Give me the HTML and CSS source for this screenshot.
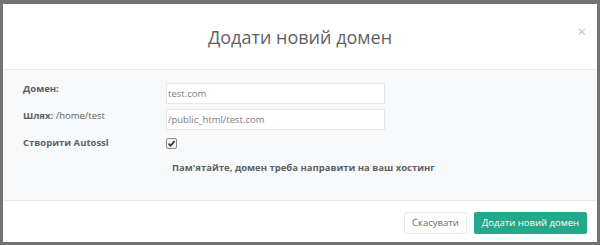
FILE: index.html
```html
<!DOCTYPE html>
<html lang="uk">
<head>
    <meta charset="UTF-8">
    <title>Додати новий домен</title>
    <link rel="stylesheet" href="styles.css">
</head>
<body>
    <div class="modal">
        <div class="modal-header">
            <div class="modal-title">Додати новий домен</div>
            <span class="close">&times;</span>
        </div>
        <div class="modal-body">
            <div class="form-row">
                <label class="form-label">Домен:</label>
                <input class="form-input" type="text" value="test.com">
            </div>
            <div class="form-row">
                <label class="form-label">Шлях: <span class="plain">/home/test</span></label>
                <input class="form-input" type="text" value="/public_html/test.com">
            </div>
            <div class="form-row check-row">
                <label class="form-label">Створити Autossl</label>
                <span class="checkbox">
                    <svg viewBox="0 0 12 12" width="9" height="9">
                        <path d="M2 6.2 L4.8 9 L10 2.8" fill="none" stroke="#333" stroke-width="2.2"/>
                    </svg>
                </span>
            </div>
            <div class="note">Пам'ятайте, домен треба направити на ваш хостинг</div>
        </div>
        <div class="modal-footer">
            <button class="btn btn-default">Скасувати</button>
            <button class="btn btn-primary">Додати новий домен</button>
        </div>
    </div>
</body>
</html>
```

FILE: styles.css
```css
body {
    margin: 0;
    width: 600px;
    height: 245px;
    background: #737373;
    font-family: "Open Sans", "Noto Sans", sans-serif;
    overflow: hidden;
}

.modal {
    margin: 4px 3px 0 3px;
    height: 238px;
    background: #fff;
    display: flex;
    flex-direction: column;
}

.modal-header {
    position: relative;
    height: 65px;
    display: flex;
    align-items: center;
    justify-content: center;
    border-bottom: 1px solid #e6eaef;
}

.modal-title {
    font-size: 18px;
    color: #5f6264;
    margin-top: 0;
}

.close {
    position: absolute;
    right: 11px;
    top: 17px;
    font-size: 15px;
    color: #c2c2c2;
}

.modal-body {
    height: 131px;
    background: #f7f9fb;
    border-bottom: 1px solid #e6eaef;
    padding: 13px 0 0 20px;
    box-sizing: border-box;
}

.form-row {
    display: flex;
    align-items: flex-start;
    margin-bottom: 5px;
}

.form-label {
    width: 143px;
    font-size: 9.5px;
    line-height: 12px;
    font-weight: 700;
    color: #5e6163;
}

.form-row:nth-child(2) .form-label {
    padding-top: 1px;
}

.plain {
    font-weight: 400;
}

.form-input {
    width: 219px;
    height: 21px;
    box-sizing: border-box;
    border: 1px solid #e5e6e7;
    background: #fff;
    padding: 0 0 0 1px;
    margin: 0;
    font-family: inherit;
    font-size: 9.5px;
    color: #7b7e80;
    outline: none;
}

.check-row {
    margin-top: 8px;
    margin-bottom: 0;
}

.check-row .form-label {
    margin-top: -1px;
}

.checkbox {
    width: 11px;
    height: 11px;
    box-sizing: border-box;
    border: 1px solid #8a8a8a;
    border-radius: 2px;
    background: #f1f1f1;
    display: flex;
    align-items: center;
    justify-content: center;
}

.note {
    margin: 13px 0 0 149px;
    font-size: 9.5px;
    line-height: 12px;
    font-weight: 700;
    color: #5e6163;
}

.modal-footer {
    flex: 1;
    display: flex;
    justify-content: flex-end;
    align-items: center;
    gap: 7px;
    padding-right: 10px;
}

.btn {
    height: 22px;
    margin-top: 2px;
    font-family: inherit;
    font-size: 9.5px;
    border-radius: 2px;
    padding: 0 7px;
    border: 1px solid;
}

.btn-default {
    background: #fff;
    border-color: #e7eaec;
    color: #676a6c;
}

.btn-primary {
    background: #22a88a;
    border-color: #22a88a;
    color: #fff;
}
```
